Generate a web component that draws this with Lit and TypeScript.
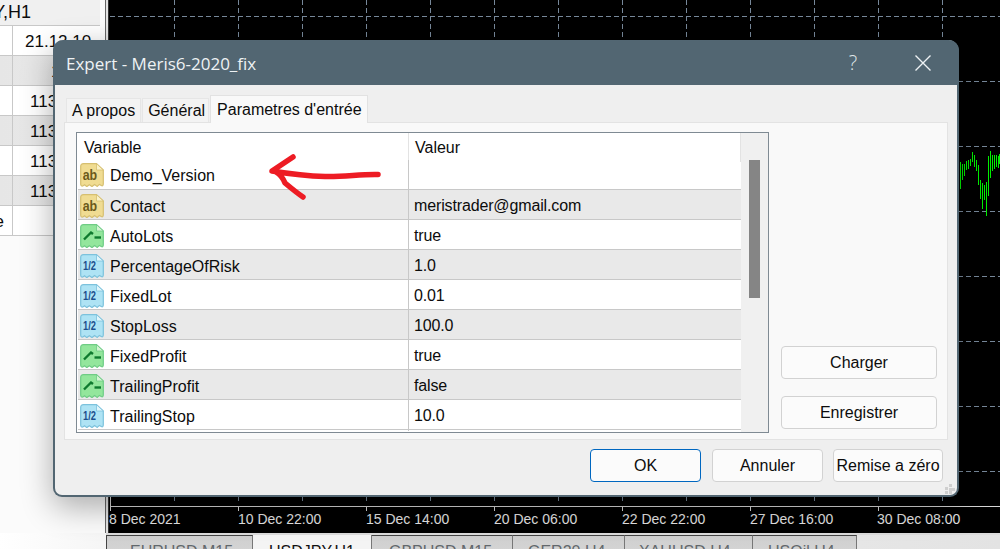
import { LitElement, html, css, svg } from "lit";
import { customElement } from "lit/decorators.js";

type Kind = "text" | "bool" | "num";
const ROWS: [string, string, Kind][] = [
  ["Demo_Version", "", "text"],
  ["Contact", "meristrader@gmail.com", "text"],
  ["AutoLots", "true", "bool"],
  ["PercentageOfRisk", "1.0", "num"],
  ["FixedLot", "0.01", "num"],
  ["StopLoss", "100.0", "num"],
  ["FixedProfit", "true", "bool"],
  ["TrailingProfit", "false", "bool"],
  ["TrailingStop", "10.0", "num"],
];

const LEFT_ROWS: [string, string, string][] = [
  ["", "21.12.10", "c1"],
  ["", "1", "c2"],
  ["", "113", "c3"],
  ["", "113", "c3"],
  ["", "113", "c3"],
  ["", "113", "c3"],
  ["e", "", "c3"],
];

const TABS: [string, number, number, boolean][] = [
  ["EURUSD,M15", 147, 23, false],
  ["USDJPY,H1", 119, 16, true],
  ["GBPUSD,M15", 141, 17, false],
  ["GER20,H4", 112, 15, false],
  ["XAUUSD,H4", 128, 14, false],
  ["USOil,H4", 104, 15, false],
];

const LABELS: [string, number][] = [
  ["8 Dec 2021", 0],
  ["10 Dec 22:00", 129],
  ["15 Dec 14:00", 257],
  ["20 Dec 06:00", 385],
  ["22 Dec 22:00", 513],
  ["27 Dec 16:00", 641],
  ["30 Dec 08:00", 768],
];

// [x, top, bottom] in page coordinates
const BARS: [number, number, number][] = [
  [960, 162, 189], [962, 164, 180], [964, 164, 176], [966, 161, 170], [968, 160, 169],
  [970, 159, 166], [972, 152, 162], [974, 155, 167], [976, 160, 171], [978, 165, 185],
  [980, 180, 199], [982, 183, 209], [984, 185, 200], [986, 182, 216], [988, 156, 196],
  [990, 151, 178], [992, 155, 171], [994, 155, 169], [996, 155, 167], [998, 156, 168], [999, 154, 164],
];

const DOC = "M3.5 .7H16.5L23.3 7V20.5C23.3 22.6 22.5 23.4 21.3 22.6L19.4 21.4L17.2 23.4L14.6 21.6L12 23.6L9.4 21.8L6.8 23.6L4.6 21.8L2.8 23C1.5 23.4 .7 22.4 .7 21V3.5C.7 1.6 1.6 .7 3.5 .7Z";

function icon(kind: Kind) {
  const palette = {
    text: { fill: "#f0dc92", edge: "#d6bf70", fold: "#fbf2c8" },
    bool: { fill: "#93e69c", edge: "#6fcc85", fold: "#d5f6d3" },
    num: { fill: "#aee3f4", edge: "#7cc2dc", fold: "#e1f6fc" },
  }[kind];
  const glyph =
    kind === "text"
      ? svg`<text x="2.7" y="17" font-family="Liberation Sans" font-weight="700" font-size="15" textLength="14.5" lengthAdjust="spacingAndGlyphs" fill="#6b5a1a">ab</text>`
      : kind === "num"
      ? svg`<text x="3" y="16" font-family="Liberation Sans" font-weight="700" font-size="13" textLength="13" lengthAdjust="spacingAndGlyphs" fill="#1d4f8c">1/2</text>`
      : svg`<path d="M4 15.500L11 8.500L13 10" fill="none" stroke="#0e7a2e" stroke-width="2.4"/><path d="M14.500 13.500H21" fill="none" stroke="#0e7a2e" stroke-width="2.4"/>`;
  return html`<svg class="ico" viewBox="0 0 24 24" width="24" height="24">
    <path d=${DOC} fill=${palette.fill} stroke=${palette.edge} stroke-width="1.2" />
    <path d="M16.500 .7V7H23.300Z" fill=${palette.fold} stroke=${palette.edge} stroke-width=".8" />
    ${glyph}
  </svg>`;
}

@customElement("app-root")
export class AppRoot extends LitElement {
  static styles = css`
    :host {
      display: block;
      position: relative;
      width: 1000px;
      height: 549px;
      overflow: hidden;
      font-family: "Liberation Sans", Arial, sans-serif;
      font-size: 16px;
      color: #0c0c0c;
      background: #fff;
    }
    .top { display: flex; height: 533px; }
    .left { width: 105px; flex: none; background: #fbfbfb; display: flex; flex-direction: column; border-right: 1px solid #666; box-sizing: content-box; }
    .sep { width: 3px; flex: none; background: #e4e4e4; border-right: 1px solid #333; box-sizing: border-box; }
    .lhead { height: 25px; display: flex; justify-content: flex-end; width: 31px; overflow: hidden; white-space: nowrap; line-height: 25px; font-size: 18px; flex: none; }
    .lhead-wrap { background: #f0f0f0; border-bottom: 1px solid #c8c8c8; width: 100px; height: 25px; }
    .ltable { width: 100px; display: flex; flex-direction: column; }
    .lrow { display: grid; grid-template-columns: 13px 87px; height: 30px; box-sizing: border-box; border-bottom: 1px solid #c8c8c8; line-height: 31px; font-size: 17px; background: #fff; }
    .lrow:nth-child(even) { background: linear-gradient(90deg, #e6e6e6, #e9e9e9); }
    .lrow > div { overflow: hidden; white-space: nowrap; }
    .l1 { border-right: 1px solid #c8c8c8; display: flex; justify-content: flex-end; padding-right: 8px; box-sizing: border-box; }
    .c1 { padding-left: 12px; }
    .c2 { padding-left: 38px; }
    .c3 { padding-left: 17px; }
    .chart { flex: 1; background: #000; display: block; min-width: 0; }
    .strip { height: 16px; display: flex; background: linear-gradient(90deg, #fff 0, #f6f6f6 10%, #e3e3e3 100%); }
    .strip-gap { width: 106px; flex: none; }
    .tabs { flex: 1; border-top: 2px solid #dcdcdc; display: flex; overflow: hidden; }
    .btab { height: 30px; box-sizing: border-box; padding-top: 7px; line-height: 18px; color: #62686c; white-space: nowrap; background: linear-gradient(#cfcfcf, #d9d9d9); border-right: 1px solid #777; border-top: 1px solid #444; flex: none; }
    .btab.first { border-left: 1px solid #444; }
    .btab.on { background: #f4f4f4; color: #111; border-top: none; padding-top: 8px; }

    .dialog {
      position: absolute;
      left: 53px;
      top: 40px;
      width: 906px;
      height: 457px;
      box-sizing: border-box;
      border: 2px solid #526672;
      border-top: none;
      border-radius: 11px 11px 9px 9px;
      background: #efefef;
      box-shadow: 0 10px 32px rgba(0, 0, 0, 0.32);
      display: flex;
      flex-direction: column;
    }
    .title {
      height: 45px;
      flex: none;
      background: #526672;
      color: #eef2f4;
      margin-right: -2px;
      margin-left: -2px;
      border-radius: 10px 10px 0 0;
      display: flex;
      align-items: center;
      padding-left: 13px;
      padding-top: 2px;
      box-sizing: border-box;
      font-family: "Open Sans", sans-serif;
      font-size: 17px;
    }
    .title .name { flex: 1; }
    .q { font-size: 20px; width: 20px; text-align: center; margin-right: 52px; font-weight: 300; color: #dfe5e8; margin-top: -3px; }
    .x { margin-right: 28px; margin-top: -2px; display: block; }
    .tabstrip { display: flex; align-items: flex-end; height: 37px; padding-left: 11px; flex: none; position: relative; z-index: 1; }
    .tab { height: 24px; box-sizing: border-box; border: 1px solid #e6e6e6; border-bottom: none; padding: 0 5px; line-height: 23px; background: #f3f3f3; margin-right: 1px; white-space: nowrap; }
    .tab.mid { padding-right: 3px; }
    .tab.active { height: 28px; background: #f9f9f9; padding: 0 6px; margin-bottom: -1px; line-height: 27px; border-color: #e2e2e2; width: 158px; }
    .panel { margin: 0 9px; height: 318px; box-sizing: border-box; background: #f9f9f9; border: 1px solid #e3e3e3; padding: 9px 11px 5px; display: flex; flex: none; }
    .list { width: 693px; height: 301px; box-sizing: border-box; border: 1px solid #7f8a93; background: #fff; display: flex; flex: none; }
    .cols { width: 664px; flex: none; }
    .hdr { height: 27px; display: grid; grid-template-columns: 331px 1fr; line-height: 29px; }
    .hdr .h1 { padding-left: 7px; }
    .hdr .h2 { border-left: 1px solid #e3e3e3; border-right: 1px solid #e3e3e3; padding-left: 6px; }
    .row { height: 30px; box-sizing: border-box; display: grid; grid-template-columns: 330px 1fr; border-bottom: 1px solid #c8c8c8; margin-left: 1px; background: #fff; }
    .row:nth-child(odd) { background: #e9e9e9; }
    .n { display: flex; align-items: center; gap: 6px; padding-left: 2px; }
    .n span { line-height: 31px; height: 29px; }
    .ico { display: block; flex: none; }
    .v { border-left: 1px solid #c8c8c8; padding-left: 5px; line-height: 31px; letter-spacing: -0.14px; }
    .scroll { flex: 1; background: #f0f0f0; padding: 27px 8px 0; box-sizing: border-box; }
    .thumb { height: 138px; width: 11px; background: #858585; }
    .side { flex: 1; margin-left: 12px; display: flex; flex-direction: column; justify-content: flex-end; gap: 17px; padding-bottom: 5px; }
    .btn { height: 33px; box-sizing: border-box; border: 1px solid #d2d2d2; border-radius: 4px; background: #fbfbfb; text-align: center; line-height: 31px; }
    .side .btn { width: 156px; }
    .actions { display: flex; justify-content: flex-end; gap: 11px; padding: 9px 14px 0 0; }
    .actions .btn { width: 111px; }
    .actions .btn.last { width: 110px; margin-left: -1px; white-space: nowrap; }
    .btn.ok { border-color: #0067c0; }
    .grip { position: absolute; right: 2px; bottom: 1px; display: block; }
    .arrow { position: absolute; left: 0; top: 0; pointer-events: none; }
  `;

  render() {
    const vlines = Array.from({ length: 13 }, (_, i) => 65 + 64 * i);
    const hlines = Array.from({ length: 8 }, (_, i) => 16.5 + 65 * i);
    return html`
      <div class="top">
        <div class="left">
          <div class="lhead-wrap"><div class="lhead">USDJPY,H1</div></div>
          <div class="ltable">
            ${LEFT_ROWS.map(
              ([a, b, c]) => html`<div class="lrow"><div class="l1">${a}</div><div class=${c}>${b}</div></div>`
            )}
          </div>
        </div>
        <div class="sep"></div>
        <svg class="chart" viewBox="0 0 891 533" width="891" height="533">
          ${hlines.map((y) => svg`<line x1="1" x2="891" y1=${y} y2=${y} stroke="#77889a" stroke-dasharray="5 3"/>`)}
          ${vlines.map((x) => svg`<line x1=${x + 0.5} x2=${x + 0.5} y1="0" y2="503" stroke="#77889a" stroke-dasharray="5 3"/>`)}
          <line x1="1" x2="891" y1="506.5" y2="506.5" stroke="#d6d6d6" />
          <line x1="1.5" x2="1.5" y1="490" y2="511" stroke="#d6d6d6" />
          ${[129, 257, 385, 513, 641, 769].map((x) => svg`<line x1=${x + 0.5} x2=${x + 0.5} y1="506" y2="511" stroke="#d6d6d6"/>`)}
          ${LABELS.map(
            ([t, x]) => svg`<text x=${x} y="524" fill="#e4e4e4" font-family="Liberation Sans" font-size="14">${t}</text>`
          )}
          ${BARS.map(([x, a, b]) => svg`<rect x=${x - 109} y=${a} width="1" height=${b - a} fill="#00f000"/>`)}
        </svg>
      </div>
      <div class="strip">
        <div class="strip-gap"></div>
        <div class="tabs">
          ${TABS.map(
            ([t, w, p, on], i) =>
              html`<div class="btab ${on ? "on" : ""} ${i === 0 ? "first" : ""}" style="width:${w}px;padding-left:${p}px">${t}</div>`
          )}
        </div>
      </div>

      <div class="dialog">
        <div class="title">
          <span class="name">Expert - Meris6-2020_fix</span>
          <span class="q">?</span>
          <svg class="x" width="16" height="16" viewBox="0 0 16 16">
            <path d="M.5 .5L15.500 15.500M15.500 .5L.5 15.500" stroke="#eef2f4" stroke-width="1.4" fill="none" />
          </svg>
        </div>
        <div class="tabstrip">
          <div class="tab">A propos</div>
          <div class="tab mid">Général</div>
          <div class="tab active">Parametres d'entrée</div>
        </div>
        <div class="panel">
          <div class="list">
            <div class="cols">
              <div class="hdr"><div class="h1">Variable</div><div class="h2">Valeur</div></div>
              ${ROWS.map(
                ([n, v, k]) => html`<div class="row">
                  <div class="n">${icon(k)}<span>${n}</span></div>
                  <div class="v">${v}</div>
                </div>`
              )}
            </div>
            <div class="scroll"><div class="thumb"></div></div>
          </div>
          <div class="side">
            <div class="btn">Charger</div>
            <div class="btn">Enregistrer</div>
          </div>
        </div>
        <div class="actions">
          <div class="btn ok">OK</div>
          <div class="btn">Annuler</div>
          <div class="btn last">Remise a zéro</div>
        </div>
        <svg class="grip" width="10" height="10" viewBox="0 0 10 10">
          <path d="M0 3h3v3h-3zM4 0h3v3h-3zM4 4h3v3h-3zM0 7h3v3h-3zM4 7h3v3h-3zM7 4h3v3h-3z" fill="#cfcfcf" />
        </svg>
      </div>

      <svg class="arrow" width="1000" height="549" viewBox="0 0 1000 549">
        <path
          d="M378 174.500C360 174 345 177 325 176.500C305 176 290 174 272 171L293 157M276 172C281 175 283 178 285 183C291 188 297 193 303 197"
          fill="none"
          stroke="#ed1c24"
          stroke-width="5.500"
          stroke-linecap="round"
          stroke-linejoin="round"
        />
      </svg>
    `;
  }
}
